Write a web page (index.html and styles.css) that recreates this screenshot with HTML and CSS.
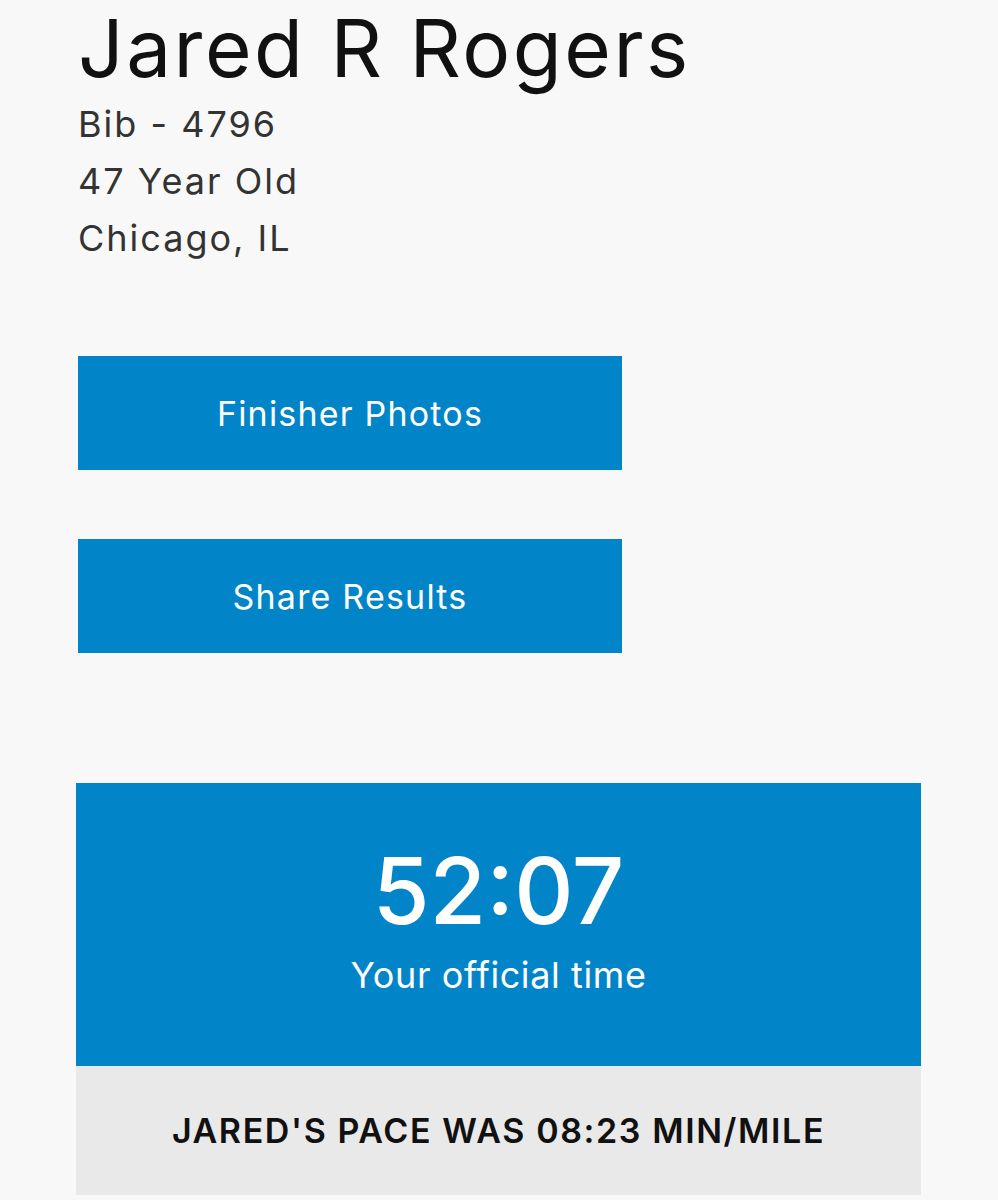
FILE: index.html
```html
<!DOCTYPE html>
<html lang="en">
<head>
    <meta charset="UTF-8">
    <meta name="viewport" content="width=device-width, initial-scale=1.0">
    <title>Race Results</title>
    <link rel="stylesheet" href="styles.css">
</head>
<body>

    <div class="container">
        <!-- Runner info -->
        <div class="runner">
            <h1 class="runner-name">Jared R Rogers</h1>
            <p class="runner-line">Bib - 4796</p>
            <p class="runner-line">47 Year Old</p>
            <p class="runner-line">Chicago, IL</p>
        </div>

        <!-- Actions -->
        <div class="actions">
            <a class="button" href="#">Finisher Photos</a>
            <a class="button" href="#">Share Results</a>
        </div>

        <!-- Official time -->
        <div class="result">
            <div class="result-time">
                <div class="time">52:07</div>
                <div class="time-label">Your official time</div>
            </div>
            <div class="pace">JARED'S PACE WAS 08:23 MIN/MILE</div>
        </div>
    </div>

</body>
</html>
```

FILE: styles.css
```css
body {
    font-family: 'Inter', 'Noto Sans', sans-serif;
    background-color: #f8f8f8;
    margin: 0;
    padding: 0;
}

.container {
    padding-left: 76px;
    width: 845px;
}

.runner {
    padding-left: 2px;
}

.runner-name {
    font-size: 80px;
    font-weight: 400;
    line-height: 96px;
    letter-spacing: 2.5px;
    color: #111;
    margin: 0;
}

.runner-line {
    font-size: 36px;
    line-height: 57px;
    letter-spacing: 2px;
    color: #333;
    margin: 0;
}

.actions {
    display: flex;
    flex-direction: column;
    gap: 69px;
    margin-top: 89px;
    padding-left: 2px;
}

.button {
    display: flex;
    align-items: center;
    justify-content: center;
    width: 544px;
    height: 114px;
    background-color: #0285c8;
    color: white;
    font-size: 34px;
    letter-spacing: 1.2px;
    text-decoration: none;
}

.result {
    margin-top: 130px;
}

.result-time {
    background-color: #0285c8;
    color: white;
    text-align: center;
    height: 283px;
    padding-top: 58px;
    box-sizing: border-box;
}

.time {
    font-size: 92px;
    font-weight: 500;
    line-height: 100px;
}

.time-label {
    font-size: 36px;
    line-height: 44px;
    letter-spacing: 0.6px;
    margin-top: 12px;
}

.pace {
    background-color: #e9e9e9;
    height: 129px;
    display: flex;
    align-items: center;
    justify-content: center;
    font-size: 34px;
    font-weight: 600;
    letter-spacing: 1.6px;
    color: #111;
}
```
